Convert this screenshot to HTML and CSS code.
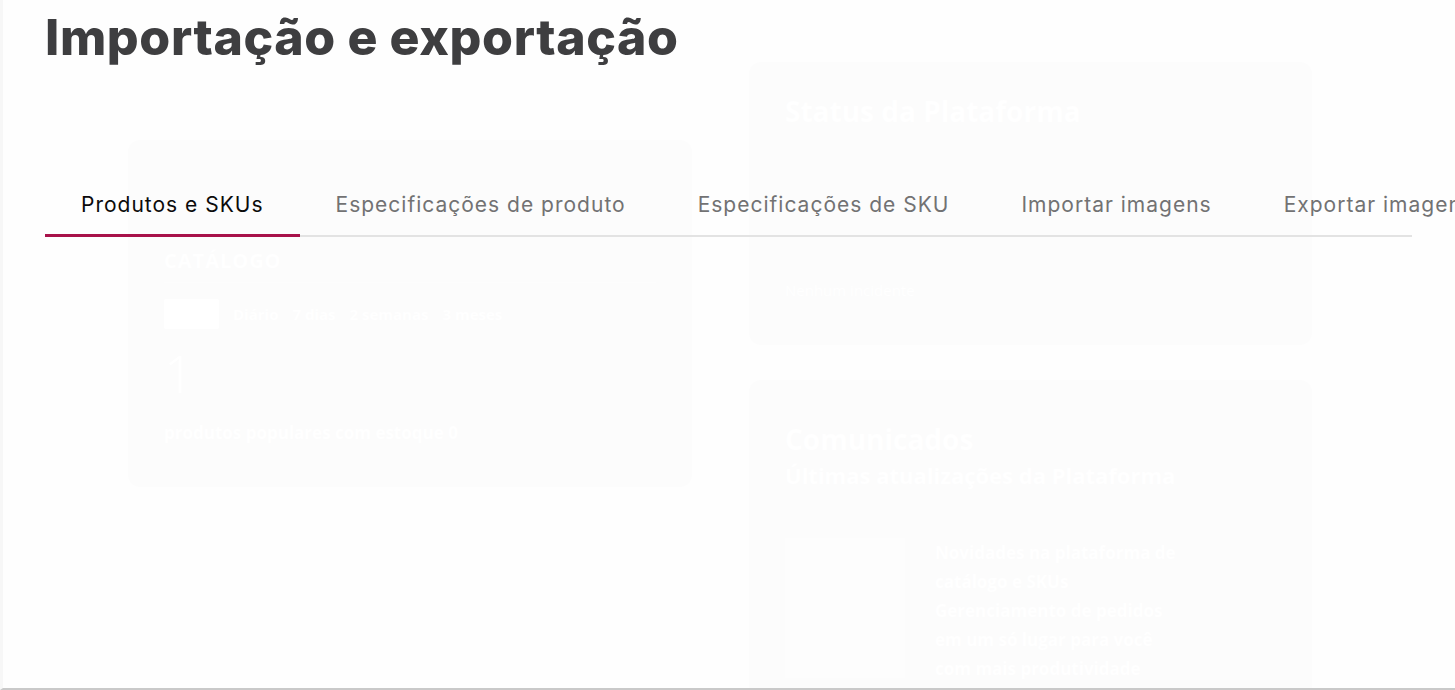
FILE: index.html
```html
<!DOCTYPE html>
<html lang="pt-BR">
<head>
<meta charset="utf-8">
<title>Importação e exportação</title>
<link rel="stylesheet" href="styles.css">
</head>
<body>
<div class="frame">
  <div class="ghost" aria-hidden="true">
    <div class="ghost-grid">
      <div class="ghost-col ghost-left">
        <div class="card card-catalog">
          <div class="g-label">CATÁLOGO</div>
          <div class="g-rule"></div>
          <div class="g-filters"><span class="g-chip"></span><span>Diário</span><span>7 dias</span><span>2 semanas</span><span>3 meses</span></div>
          <div class="g-number">1</div>
          <div class="g-text">produtos populares com estoque 0</div>
        </div>
      </div>
      <div class="ghost-col ghost-right">
        <div class="card card-status">
          <div class="g-title">Status da Plataforma</div>
          <div class="g-small">Nenhum incidente</div>
        </div>
        <div class="card card-news">
          <div class="g-title">Comunicados</div>
          <div class="g-sub">Últimas atualizações da Plataforma</div>
          <div class="g-news">
            <div class="g-thumb"></div>
            <div class="g-news-text">
              <div>Novidades na plataforma de</div>
              <div>catálogo e SKUs</div>
              <div>Gerenciamento de pedidos</div>
              <div>em um só lugar para você</div>
              <div>com mais produtividade</div>
            </div>
          </div>
        </div>
      </div>
    </div>
  </div>

  <main class="panel">
    <h1 class="title">Importação e exportação</h1>
    <nav class="tabs">
      <div class="tab active">Produtos e SKUs</div>
      <div class="tab">Especificações de produto</div>
      <div class="tab">Especificações de SKU</div>
      <div class="tab">Importar imagens</div>
      <div class="tab">Exportar imagens</div>
    </nav>
  </main>
</div>
</body>
</html>
```

FILE: styles.css
```css
* { box-sizing: border-box; }

html, body {
  margin: 0;
  padding: 0;
  background: #ffffff;
  overflow: hidden;
}

body {
  font-family: Inter, "Noto Sans", "Liberation Sans", sans-serif;
}

.frame {
  position: relative;
  width: 1455px;
  height: 690px;
  border-left: 3px solid #f7f7f7;
  border-bottom: 2px solid #c9c9c9;
  overflow: hidden;
  background: #fefefe;
}

/* faint dashboard seen through the overlay */
.ghost {
  position: absolute;
  inset: 0;
  color: #ffffff;
  font-family: "Open Sans", "Liberation Sans", sans-serif;
  font-weight: 700;
}

.ghost-grid {
  display: grid;
  grid-template-columns: 564px 563px;
  column-gap: 57px;
  padding-left: 125px;
}

.ghost-col {
  display: flex;
  flex-direction: column;
  gap: 35px;
}

.ghost-left { padding-top: 140px; }
.ghost-right { padding-top: 62px; }

.card {
  background: #fcfcfc;
  border-radius: 12px;
  padding: 30px 36px;
}

.card-catalog { height: 347px; padding-top: 108px; }
.card-status { height: 283px; }
.card-news { height: 340px; padding-top: 40px; }

.g-label { font-size: 20px; letter-spacing: 1px; line-height: 26px; }
.g-rule { height: 1px; background: #fdfdfd; margin-top: 8px; }
.g-filters { display: flex; gap: 14px; align-items: center; font-size: 15px; margin-top: 16px; }
.g-chip { width: 55px; height: 30px; background: #ffffff; border-radius: 2px; }
.g-number { font-size: 52px; font-weight: 300; line-height: 60px; margin-top: 14px; }
.g-text { font-size: 17px; margin-top: 18px; }

.g-title { font-size: 28px; line-height: 38px; }
.g-small { font-size: 15px; font-weight: 400; margin-top: 150px; }
.g-sub { font-size: 22px; margin-top: 2px; }
.g-news { display: flex; gap: 30px; margin-top: 48px; }
.g-thumb { width: 120px; height: 140px; background: #fdfdfd; }
.g-news-text { font-size: 17px; line-height: 29px; }

/* foreground panel */
.panel {
  position: relative;
  padding: 7px 40px 0 42px;
}

.title {
  margin: 0;
  font-family: Inter, "Liberation Sans", sans-serif;
  font-size: 50px;
  line-height: 60px;
  font-weight: 800;
  color: #3e3e40;
  letter-spacing: 0.6px;
}

.tabs {
  display: flex;
  margin-top: 126px;
  border-bottom: 2px solid #e3e3e3;
  width: 1367px;
}

.tab {
  flex: none;
  padding: 0 36px 17px;
  font-size: 21px;
  line-height: 24px;
  letter-spacing: 1px;
  color: #727273;
  white-space: nowrap;
  border-bottom: 3px solid transparent;
  margin-bottom: -2px;
}

.tab.active {
  color: #0b0b0b;
  border-bottom-color: #a8124a;
}
```
